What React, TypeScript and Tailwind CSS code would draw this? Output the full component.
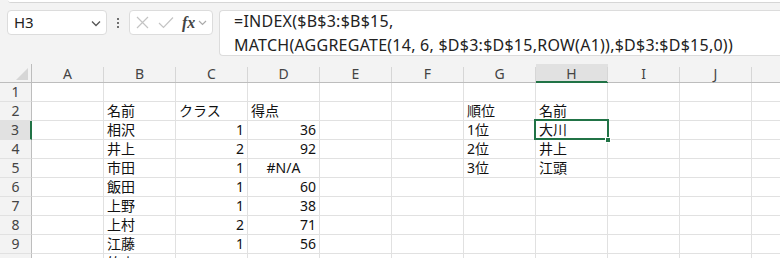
import React from "react";

const FONT = '"Noto Sans", "Noto Sans CJK JP", sans-serif';
const COLS = ["A", "B", "C", "D", "E", "F", "G", "H", "I", "J"];

type Align = "l" | "r" | "c";
type Cell = { t: string; a?: Align };

const data: Record<number, Record<string, Cell>> = {
  2: { B: { t: "名前" }, C: { t: "クラス" }, D: { t: "得点" }, G: { t: "順位" }, H: { t: "名前" } },
  3: { B: { t: "相沢" }, C: { t: "1", a: "r" }, D: { t: "36", a: "r" }, G: { t: "1位" }, H: { t: "大川" } },
  4: { B: { t: "井上" }, C: { t: "2", a: "r" }, D: { t: "92", a: "r" }, G: { t: "2位" }, H: { t: "井上" } },
  5: { B: { t: "市田" }, C: { t: "1", a: "r" }, D: { t: "#N/A", a: "c" }, G: { t: "3位" }, H: { t: "江頭" } },
  6: { B: { t: "飯田" }, C: { t: "1", a: "r" }, D: { t: "60", a: "r" } },
  7: { B: { t: "上野" }, C: { t: "1", a: "r" }, D: { t: "38", a: "r" } },
  8: { B: { t: "上村" }, C: { t: "2", a: "r" }, D: { t: "71", a: "r" } },
  9: { B: { t: "江藤" }, C: { t: "1", a: "r" }, D: { t: "56", a: "r" } },
  10: { B: { t: "竹内" } },
};

function alignClass(a?: Align) {
  if (a === "r") return "text-right";
  if (a === "c") return "text-center";
  return "text-left";
}

export default function App() {
  const rows = [1, 2, 3, 4, 5, 6, 7, 8, 9, 10];
  return (
    <div className="w-[780px] h-[258px] overflow-hidden bg-[#f3f3f3] text-[#222]" style={{ fontFamily: FONT }}>
      {/* top strip */}
      <div className="h-[3px] flex">
        <div className="ml-[8px] flex-1 bg-white border-b border-[#d6d6d6] rounded-bl-[4px]" />
      </div>

      {/* formula bar */}
      <div className="flex items-start pl-[7px] pt-[7px] h-[61px]">
        <div className="w-[100px] h-[25px] bg-white border border-[#dcdcdc] rounded-[4px] flex items-center pl-[6px] pr-[5px]">
          <span className="text-[15px] text-[#222] leading-none flex-1">H3</span>
          <svg width="10" height="7" viewBox="0 0 10 7" className="mt-[1px]">
            <path d="M1 1.5 L5 5.5 L9 1.5" fill="none" stroke="#555" strokeWidth="1.3" />
          </svg>
        </div>
        <div className="w-[22px] h-[25px] flex flex-col items-center justify-center gap-[2px]">
          <div className="w-[2px] h-[2px] bg-[#444] rounded-full" />
          <div className="w-[2px] h-[2px] bg-[#444] rounded-full" />
          <div className="w-[2px] h-[2px] bg-[#444] rounded-full" />
        </div>
        <div className="w-[84px] h-[25px] bg-white border border-[#dcdcdc] rounded-[4px] flex items-center pl-[6px]">
          <svg width="13" height="13" viewBox="0 0 13 13">
            <path d="M1 1 L12 12 M12 1 L1 12" stroke="#c4c4c4" strokeWidth="1.2" fill="none" />
          </svg>
          <svg width="16" height="13" viewBox="0 0 16 13" className="ml-[9px]">
            <path d="M1 7 L5.5 11.5 L15 1.5" stroke="#c4c4c4" strokeWidth="1.2" fill="none" />
          </svg>
          <span
            className="ml-[8px] text-[16px] italic font-bold text-[#444] leading-none"
            style={{ fontFamily: '"Liberation Serif", serif' }}
          >
            fx
          </span>
          <svg width="9" height="6" viewBox="0 0 9 6" className="ml-[3px] mt-[1px]">
            <path d="M1 1 L4.5 4.5 L8 1" fill="none" stroke="#aaa" strokeWidth="1.2" />
          </svg>
        </div>
        <div className="ml-[6px] flex-1 h-[46px] bg-white border border-r-0 border-[#dcdcdc] rounded-l-[4px] pl-[14px] text-[16px] tracking-[0.25px] text-[#222] whitespace-pre">
          <div className="leading-[20px]">=INDEX($B$3:$B$15,</div>
          <div className="leading-[20px] mt-[4px]">MATCH(AGGREGATE(14, 6, $D$3:$D$15,ROW(A1)),$D$3:$D$15,0))</div>
        </div>
      </div>

      {/* grid */}
      <div className="relative bg-white">
        <div className="grid grid-cols-[32px_repeat(10,72px)_1fr] text-[14px]">
          <div className="h-[19px] bg-[#f3f3f3] border-r border-b border-[#bdbdbd] relative">
            <svg width="12" height="12" viewBox="0 0 12 12" className="absolute right-[3px] bottom-[2px]">
              <polygon points="12,0 12,12 0,12" fill="#d6d6d6" />
            </svg>
          </div>
          {COLS.map((c) => {
            const sel = c === "H";
            return (
              <div
                key={c}
                className={
                  "h-[19px] flex flex-col " +
                  (sel ? "bg-[#e1e1e1] border-b-2 border-[#217346]" : "bg-[#f3f3f3] border-b border-[#bdbdbd]")
                }
              >
                <div className="flex-1 mt-[3px] border-r border-[#d6d6d6] flex items-center justify-center text-[#444] leading-none pb-[1px]">
                  {c}
                </div>
              </div>
            );
          })}
          <div className="h-[19px] bg-[#f3f3f3] border-b border-[#bdbdbd]" />

          {rows.map((r) => {
            const selRow = r === 3;
            return (
              <React.Fragment key={r}>
                <div
                  className={
                    "h-[19px] border-b border-[#e1e1e1] flex items-center justify-center text-[#444] leading-none " +
                    (selRow ? "bg-[#e1e1e1] border-r-2 border-r-[#217346]" : "bg-[#f3f3f3] border-r border-r-[#bdbdbd]")
                  }
                >
                  {r <= 9 ? r : ""}
                </div>
                {COLS.map((c) => {
                  const cell = data[r]?.[c];
                  return (
                    <div
                      key={c}
                      className={
                        "h-[19px] border-r border-b border-[#e1e1e1] px-[3px] leading-[18px] whitespace-nowrap text-[#111] " +
                        alignClass(cell?.a)
                      }
                    >
                      {cell?.t ?? ""}
                    </div>
                  );
                })}
                <div className="h-[19px] border-b border-[#e1e1e1]" />
              </React.Fragment>
            );
          })}
        </div>

        {/* selection overlay on H3 */}
        <div className="absolute left-[534px] top-[55px] w-[75px] h-[21px] border-2 border-[#217346]" />
        <div className="absolute left-[605px] top-[73px] w-[6px] h-[6px] bg-[#217346] border border-white" />
      </div>
    </div>
  );
}
